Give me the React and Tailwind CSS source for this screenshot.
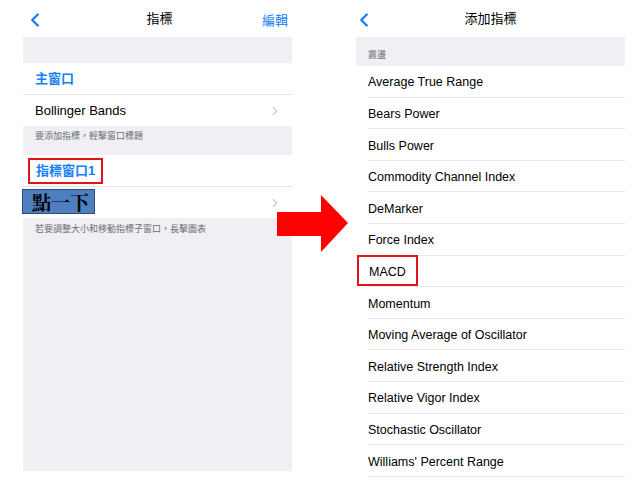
import { ChevronLeft, ChevronRight } from "lucide-react";

const font = { fontFamily: '"Liberation Sans", "Noto Sans CJK TC", sans-serif' };

const indicators = [
  "Average True Range",
  "Bears Power",
  "Bulls Power",
  "Commodity Channel Index",
  "DeMarker",
  "Force Index",
  "MACD",
  "Momentum",
  "Moving Average of Oscillator",
  "Relative Strength Index",
  "Relative Vigor Index",
  "Stochastic Oscillator",
  "Williams' Percent Range",
];

const NavBar = ({ title, right }) => (
  <div className="relative h-[37px] flex items-center justify-center bg-white">
    <ChevronLeft className="absolute left-[-3px] top-[9px] w-[22px] h-[22px] text-[#157efb]" strokeWidth={2.6} />
    <span className="text-[13px] text-black">{title}</span>
    {right && <span className="absolute right-[4px] top-[11px] text-[13px] text-[#157efb]">{right}</span>}
  </div>
);

const App = () => {
  return (
    <div className="relative w-[640px] h-[480px] bg-white overflow-hidden flex" style={font}>
      {/* left screen */}
      <div className="ml-[23px] w-[269px] h-[471px] flex flex-col">
        <div className="pl-[4px]">
          <NavBar title="指標" right="編輯" />
        </div>
        <div className="h-[26px] bg-[#efeff4]" />
        <div className="h-[32px] pl-[12px] flex items-center border-b border-[#e4e4e8]">
          <span className="text-[13px] font-bold text-[#157efb]">主窗口</span>
        </div>
        <div className="h-[31px] pl-[12px] pr-[10px] flex items-center justify-between">
          <span className="text-[13px] text-black">Bollinger Bands</span>
          <ChevronRight className="w-[14px] h-[14px] text-[#c7c7cc]" />
        </div>
        <div className="h-[29px] bg-[#efeff4] pl-[12px] pt-[4px] text-[9px] leading-[12px] text-[#6d6d72]">
          要添加指標，輕擊窗口標題
        </div>
        <div className="h-[32px] pl-[5px] flex items-center border-b border-[#e4e4e8]">
          <div className="h-[26px] px-[6px] flex items-center border-2 border-[#e2121b]">
            <span className="text-[13px] font-bold text-[#157efb]">指標窗口1</span>
          </div>
        </div>
        <div className="relative h-[31px] pr-[10px] flex items-center justify-end">
          <div className="absolute left-[-1px] top-[2px] w-[73px] h-[25px] bg-[#4f7fbf] border border-[#2e4d7a] flex items-center pl-[9px]">
            <span className="text-[19px] font-bold text-black leading-none" style={{ fontFamily: '"Noto Serif CJK TC", "Noto Sans CJK TC", serif' }}>點一下</span>
          </div>
          <ChevronRight className="w-[14px] h-[14px] text-[#c7c7cc]" />
        </div>
        <div className="flex-1 bg-[#efeff4] pl-[12px] pt-[5px] text-[9px] leading-[12px] text-[#6d6d72]">
          若要調整大小和移動指標子窗口，長擊圖表
        </div>
      </div>

      {/* right screen */}
      <div className="ml-[64px] w-[269px] flex flex-col">
        <NavBar title="添加指標" />
        <div className="h-[29px] bg-[#efeff4] pl-[12px] flex items-end pb-[5px] text-[9px] leading-[12px] text-[#6d6d72]">
          震盪
        </div>
        {indicators.map((name) => (
          <div key={name} className="h-[31.6px] shrink-0 pl-[12px]">
            <div className="h-full flex items-center border-b border-[#e8e8ec]">
              {name === "MACD" ? (
                <span className="-ml-[11px] h-[31px] px-[10px] pt-[3px] flex items-center border-2 border-[#e2121b] text-[12.5px] text-black">MACD</span>
              ) : (
                <span className="pt-[3px] text-[12.5px] text-black">{name}</span>
              )}
            </div>
          </div>
        ))}
      </div>

      {/* red arrow */}
      <svg className="absolute left-[277px] top-[195px]" width="72" height="58" viewBox="0 0 72 58">
        <polygon points="0,17 44,17 44,0 71,28 44,57 44,41 0,41" fill="#ff0000" />
      </svg>
    </div>
  );
};

export default App;
